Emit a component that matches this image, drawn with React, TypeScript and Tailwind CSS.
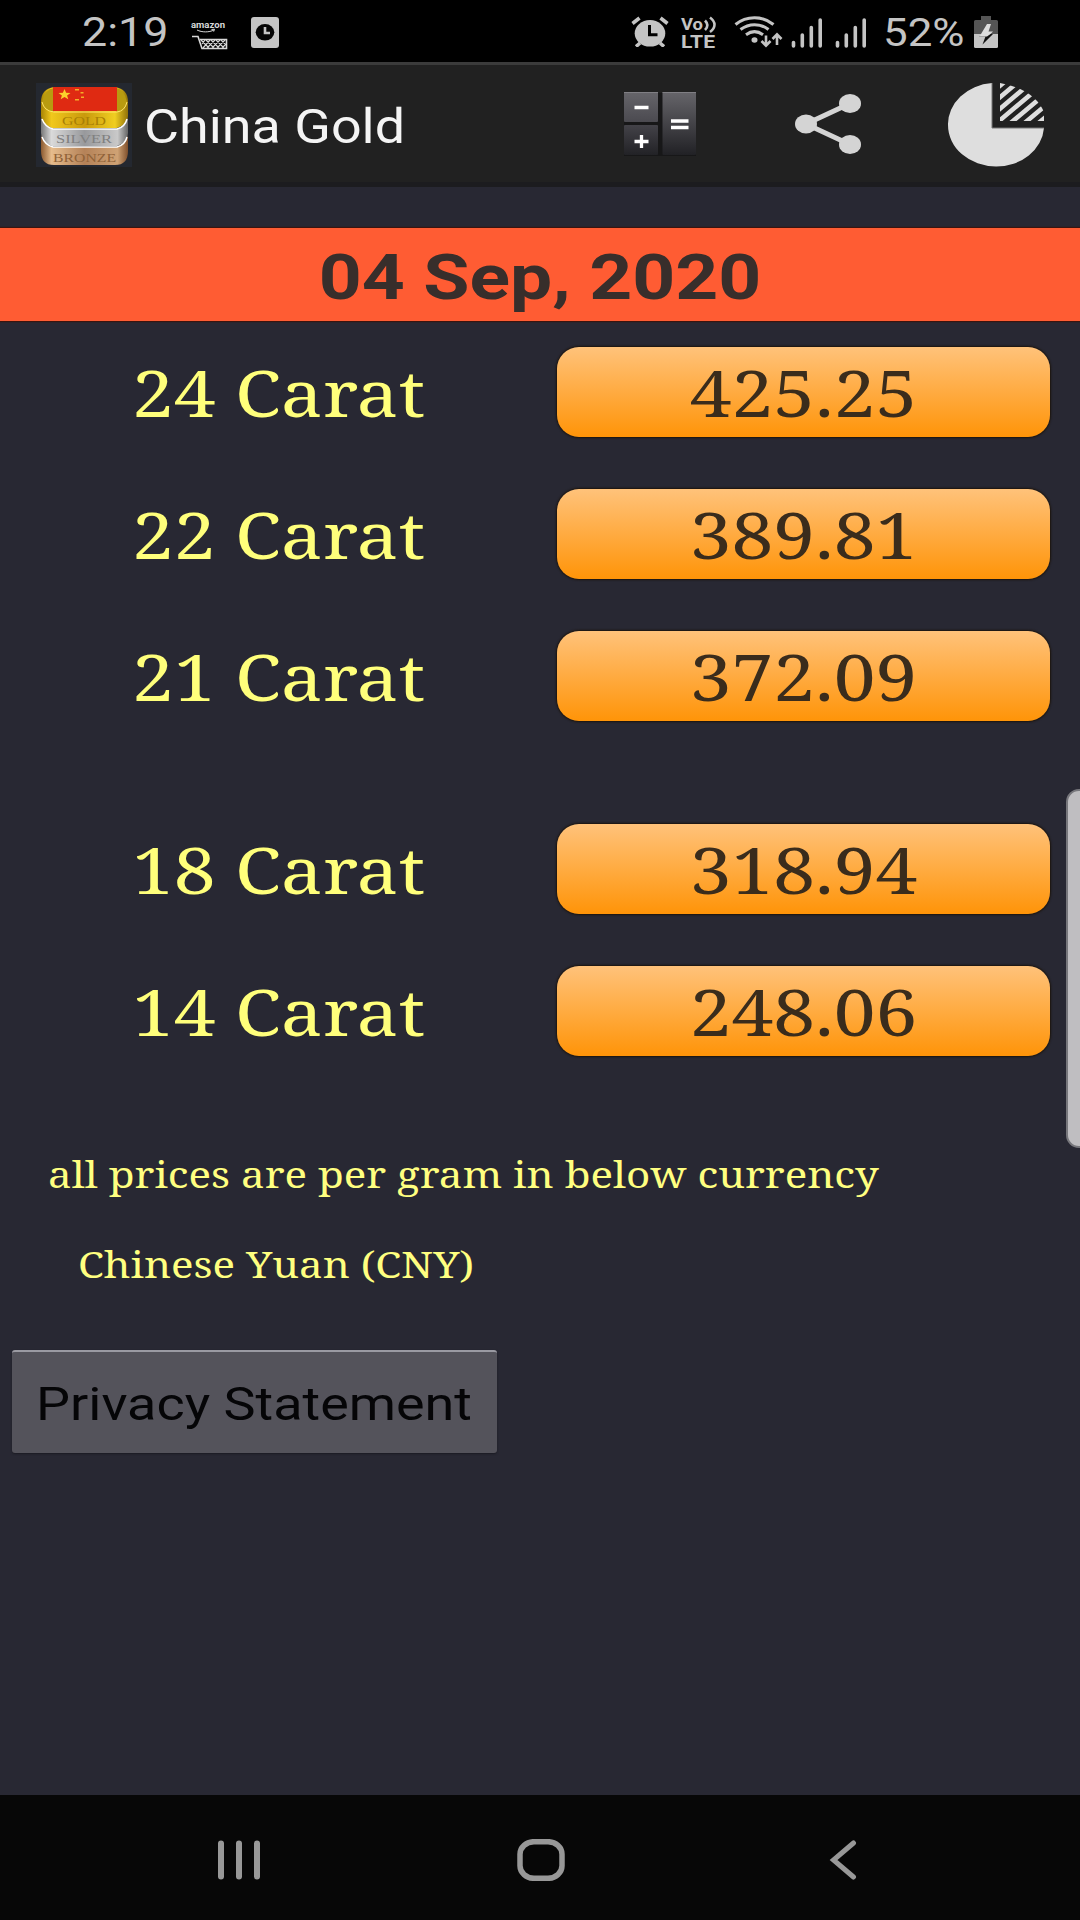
import React from 'react';

interface Rate {
  carat: string;
  price: string;
}

const upperRates: Rate[] = [
  { carat: '24 Carat', price: '425.25' },
  { carat: '22 Carat', price: '389.81' },
  { carat: '21 Carat', price: '372.09' },
];

const lowerRates: Rate[] = [
  { carat: '18 Carat', price: '318.94' },
  { carat: '14 Carat', price: '248.06' },
];

const SignalIcon = ({ className }: { className: string }) => (
  <svg viewBox="0 0 32 30" className={className} stroke="#c4c4c4" strokeWidth="3.6" strokeLinecap="round">
    <path d="M2.5 24.5v3.5M11.3 17v11M20.3 9.500v18.500M29.200 2v26" />
  </svg>
);

const StatusBar = () => (
  <div className="flex h-[62px] items-start bg-black font-['Roboto',sans-serif] text-[#c4c4c4]">
    <span className="ml-[82px] mt-[13px] block w-[109px] origin-left scale-x-[1.12] whitespace-nowrap text-[40px] leading-10">2:19</span>
    <svg viewBox="0 0 38 30" className="mt-5 h-[30px] w-[38px] overflow-visible" fill="none" stroke="#d8d8d8">
      <text x="0" y="8" textLength="34" lengthAdjust="spacingAndGlyphs" fontSize="9.500" fontWeight="700" fill="#d8d8d8" stroke="none">amazon</text>
      <path d="M6 10c5 2.500 12 2.500 17 0M20.500 9.500l3-.3-.8 2.400" strokeWidth="1" />
      <path d="M1 16.500h6l4 12h24.500V19.500H9" strokeWidth="1.600" />
      <path d="M10 20l8 8M15 20l8 8M20 20l8 8M25 20l8 8M30 20l5 5M14 20l-3 4M19 20l-7 8M24 20l-8 8M29 20l-8 8M34 20l-8 8M35 24l-4 4" strokeWidth="1.200" />
    </svg>
    <svg viewBox="0 0 28 31" className="ml-[22px] mt-[17px] h-[31px] w-7">
      <rect width="28" height="31" rx="3" fill="#c4c4c4" />
      <ellipse cx="14" cy="15.300" rx="9.300" ry="8.300" fill="#050505" />
      <path d="M14 10v6h5" fill="none" stroke="#c4c4c4" strokeWidth="2.600" />
    </svg>
    <svg viewBox="0 0 38 31" className="ml-[352px] mt-4 h-[31px] w-[38px]">
      <path d="M1.500 7.500L8.500 2M36.500 7.500L29.500 2M9 27l-4 3.500M29 27l4 3.500" stroke="#c4c4c4" strokeWidth="3.600" />
      <ellipse cx="19" cy="17.300" rx="15.300" ry="13.300" fill="#c4c4c4" />
      <path d="M18.500 9v9.700h8" fill="none" stroke="#000" strokeWidth="3" />
    </svg>
    <svg viewBox="0 0 36 34" className="ml-3 mt-4 h-[34px] w-9 overflow-visible" fill="#c4c4c4">
      <text x="0" y="14" textLength="22" lengthAdjust="spacingAndGlyphs" fontSize="17" fontWeight="700">Vo</text>
      <text x="0" y="31.500" textLength="34" lengthAdjust="spacingAndGlyphs" fontSize="17.500" fontWeight="700">LTE</text>
      <path d="M24 4.500c3 3 3 6.500 0 9.500M29 1.500c6 4.500 6 10 0 14.500" fill="none" stroke="#c4c4c4" strokeWidth="2.600" />
    </svg>
    <svg viewBox="0 0 49 32" className="ml-[17px] mt-4 h-8 w-[49px]" fill="none" stroke="#c4c4c4" strokeWidth="3">
      <path d="M1.500 8.500c11-9 27-9 38 0M6.500 13.500c8.500-6.500 19.500-6.500 28 0M12 18.700c5.500-4 11.500-4 17 0" />
      <ellipse cx="20.500" cy="24" rx="3" ry="2.700" fill="#c4c4c4" stroke="none" />
      <path d="M32 19.500v10M27.500 25l4.500 4.700 4.500-4.700M43 29V19M38.500 23l4.500-4.700 4.500 4.700" strokeWidth="2.600" />
    </svg>
    <SignalIcon className="ml-2 mt-[18px] h-[30px] w-8" />
    <SignalIcon className="ml-3 mt-[18px] h-[30px] w-8" />
    <span className="ml-4 mt-[13px] block w-[91px] origin-left scale-x-[1.11] whitespace-nowrap text-[39.500px] leading-10">52%</span>
    <svg viewBox="0 0 24 32" className="mt-4 h-8 w-6">
      <path d="M7 0h10v4h5.500q1.500 0 1.500 1.500V18H0V5.500Q0 4 1.500 4H7z" fill="#555" />
      <path d="M0 18h24v12.500q0 1.500-1.500 1.500h-21Q0 32 0 30.500z" fill="#c4c4c4" />
      <path d="M19 18l-10.500 10.500 3-8H5l5-2.500z" fill="#111" />
      <path d="M13 8h4l-2.500 7.500H19L16.500 18 13 20.500H5.500z" fill="#ddd" />
    </svg>
  </div>
);

const AppLogo = () => (
  <svg viewBox="0 0 96 84" className="h-[84px] w-24">
    <defs>
      <linearGradient id="gold" x2="1">
        <stop stopColor="#a88404" />
        <stop offset=".12" stopColor="#f1c81c" />
        <stop offset=".5" stopColor="#c9990c" />
        <stop offset=".85" stopColor="#f0ce22" />
        <stop offset="1" stopColor="#927208" />
      </linearGradient>
      <linearGradient id="silver" x2="1">
        <stop stopColor="#777" />
        <stop offset=".12" stopColor="#dadada" />
        <stop offset=".5" stopColor="#98999c" />
        <stop offset=".88" stopColor="#c9c9c9" />
        <stop offset="1" stopColor="#666" />
      </linearGradient>
      <linearGradient id="bronze" x2="1">
        <stop stopColor="#8c5a30" />
        <stop offset=".12" stopColor="#e6bc8c" />
        <stop offset=".5" stopColor="#b58258" />
        <stop offset=".88" stopColor="#cfa274" />
        <stop offset="1" stopColor="#80502c" />
      </linearGradient>
    </defs>
    <rect width="96" height="84" fill="#242830" />
    <path d="M5 52q2 8 11 12h65q9-4 11-12v16q0 14-13 14H18Q5 82 5 68z" fill="url(#bronze)" />
    <path d="M5 34q2 8 11 12h65q9-4 11-12v16q0 9-11 13H16Q5 59 5 50z" fill="url(#silver)" />
    <path d="M18 4h61q13 2 13 15v14q0 8-11 12H16Q5 41 5 33V19Q5 6 18 4z" fill="url(#gold)" />
    <path d="M6 19Q9 6 18 5v24Q8 27 6 19zM91 19Q88 6 80 5v24q9-2 11-10z" fill="#b89b10" />
    <path d="M6 19q2 9 12 10h63q8-1 10-10" fill="none" stroke="#ffe569" strokeWidth="1" />
    <path d="M6 36q3 8 11 10h64q8-2 10-10M6 54q3 8 11 10h64q8-2 10-10" fill="none" stroke="#fff" strokeWidth="1.500" />
    <path d="M17 4h64v24H17z" fill="#df2a12" />
    <path d="M28.500 6l1.600 3.700 4.400.2-3.400 2.500 1.200 3.800-3.800-2.200-3.800 2.200 1.200-3.800-3.400-2.500 4.400-.2z" fill="#fbd02c" />
    <path d="M39 6h4v1.500h-4zM44.500 9h3v1.500h-3zM45 13.500h3V15h-3zM39 16h4v1.500h-4z" fill="#f4ae28" />
    <g fontFamily="Liberation Serif, serif" fontSize="13.500">
      <text x="26" y="42" textLength="44" lengthAdjust="spacingAndGlyphs" fill="#a87f05">GOLD</text>
      <text x="20" y="60" textLength="56" lengthAdjust="spacingAndGlyphs" fill="#808080">SILVER</text>
      <text x="17" y="78.500" textLength="63" lengthAdjust="spacingAndGlyphs" fill="#8f6238">BRONZE</text>
    </g>
  </svg>
);

const CalculatorIcon = () => (
  <svg viewBox="0 0 72 64" className="h-16 w-[72px]">
    <defs>
      <linearGradient id="key" x2="0" y2="1">
        <stop stopColor="#66656a" />
        <stop offset="1" stopColor="#4b4a50" />
      </linearGradient>
      <linearGradient id="keyDark" x2="0" y2="1">
        <stop stopColor="#434248" />
        <stop offset="1" stopColor="#222226" />
      </linearGradient>
      <linearGradient id="keyTall" x2="0" y2="1">
        <stop stopColor="#66656a" />
        <stop offset="1" stopColor="#212125" />
      </linearGradient>
    </defs>
    <rect x="-1" y="1" width="74" height="63" rx="2" fill="#171718" />
    <rect width="34" height="30" y="0" rx="1" fill="url(#key)" />
    <rect width="34" height="30" y="33" rx="1" fill="url(#keyDark)" />
    <rect x="38.500" width="33.500" height="63" rx="1" fill="url(#keyTall)" />
    <path d="M0 .5h34M38.500 .5H72" stroke="#807f84" />
    <path d="M10.500 15.500H24.500M10.500 49.500H24.500M17.500 43v13M47 29h17.500M47 35.500h17.500" stroke="#fff" strokeWidth="3.300" />
  </svg>
);

const ShareIcon = () => (
  <svg viewBox="0 0 66 60" className="ml-[99px] h-[60px] w-[66px]" fill="#d4d4d4">
    <path d="M55 9.500L11 30l44 20.500" fill="none" stroke="#d4d4d4" strokeWidth="5" />
    <ellipse cx="55" cy="9.500" rx="11" ry="9.500" />
    <ellipse cx="11" cy="30" rx="11" ry="9.500" />
    <ellipse cx="55" cy="50.500" rx="11" ry="9.500" />
  </svg>
);

const ChartIcon = () => (
  <svg viewBox="0 0 96 84" className="ml-[87px] h-[84px] w-24">
    <defs>
      <clipPath id="slice">
        <path d="M52 0Q86 6 96 29v9H52z" />
      </clipPath>
    </defs>
    <path d="M44 0v45h52A48 41.500 0 0 1 48 83.500 48 41.500 0 0 1 0 42 48 41.500 0 0 1 44 0z" fill="#dedede" />
    <path d="M44 0v45h52" fill="none" stroke="#777" />
    <g clipPath="url(#slice)" stroke="#dedede" strokeWidth="4.600">
      <path d="M48 6l50-42M48 17.500l50-42M48 29l50-42M48 40.500l50-42M62 40.500l50-42M76 40.500l50-42M90 40.500l50-42" />
    </g>
  </svg>
);

const AppBar = () => (
  <header className="flex h-[125px] items-start border-t-[3px] border-b-[5px] border-t-[#3b3b3b] border-b-[#1c1c1f] bg-[#212121] pl-9">
    <div className="mt-[18px]">
      <AppLogo />
    </div>
    <h1 className="ml-3 mt-[37px] w-[480px] origin-left scale-x-[1.122] whitespace-nowrap font-['Roboto',sans-serif] text-[48px] leading-[50px] text-[#f4f4f4]">China Gold</h1>
    <div className="mt-[27px]">
      <CalculatorIcon />
    </div>
    <div className="mt-[29px]">
      <ShareIcon />
    </div>
    <div className="mt-[18px]">
      <ChartIcon />
    </div>
  </header>
);

const RateRow: React.FC<Rate> = ({ carat, price }) => (
  <div className="flex h-[90px] items-start font-['Noto_Serif','DejaVu_Serif',serif] text-[64px] leading-[92px]">
    <div className="w-[557px] text-center text-[#ffff7b]">
      <span className="inline-block scale-x-[1.168] whitespace-nowrap">{carat}</span>
    </div>
    <div className="h-[90px] w-[493px] rounded-[22px] bg-linear-to-b/srgb from-[#ffc27a] to-[#ff9408] text-center text-[#3a2c1c] shadow-[0_0_2px_1px_#1c140c]">
      <span className="inline-block scale-x-[1.168] whitespace-nowrap">{price}</span>
    </div>
  </div>
);

const NavBar = () => (
  <nav className="flex h-[125px] items-start bg-[#070707] pt-11">
    <svg viewBox="0 0 42 40" className="ml-[218px] mt-[1px] h-10 w-[42px]" stroke="#989898" strokeWidth="6" strokeLinecap="round">
      <path d="M3 3.500v33M21 3.500v33M39 3.500v33" />
    </svg>
    <svg viewBox="0 0 48 42" className="ml-[257px] h-[42px] w-12" fill="none" stroke="#989898" strokeWidth="5.500">
      <rect x="3" y="2.700" width="42" height="36.600" rx="14" ry="12.500" />
    </svg>
    <svg viewBox="0 0 28 40" className="ml-[264px] mt-[1px] h-10 w-7" fill="none" stroke="#989898" strokeWidth="5" strokeLinecap="round">
      <path d="M24.500 3L4.500 20l20 17" />
    </svg>
  </nav>
);

const App: React.FC = () => {
  return (
    <div className="relative flex h-[1920px] w-[1080px] flex-col overflow-hidden bg-[#282833]">
      <StatusBar />
      <AppBar />
      <main className="flex flex-1 flex-col items-start pt-[41px]">
        <div className="h-[93px] w-full bg-[#ff5c33] text-center font-['Roboto',sans-serif] text-[63px] font-bold leading-[100px] text-[#382e2b] shadow-[0_0_1px_1px_#3a1510]">
          <span className="inline-block scale-x-[1.19] whitespace-nowrap">04 Sep, 2020</span>
        </div>
        <div className="mt-[26px] flex flex-col gap-[52px]">
          {upperRates.map((rate) => (
            <RateRow key={rate.carat} {...rate} />
          ))}
        </div>
        <div className="mt-[103px] flex flex-col gap-[52px]">
          {lowerRates.map((rate) => (
            <RateRow key={rate.carat} {...rate} />
          ))}
        </div>
        <div className="mt-[94px] font-['Noto_Serif','DejaVu_Serif',serif] text-[36px] leading-[50px] text-[#ffff80]">
          <p className="ml-12 origin-left scale-x-[1.169] whitespace-nowrap">all prices are per gram in below currency</p>
          <p className="ml-[78px] mt-10 origin-left scale-x-[1.168] whitespace-nowrap">Chinese Yuan (CNY)</p>
        </div>
        <button
          type="button"
          className="ml-3 mt-[60px] h-[103px] w-[485px] rounded-[3px] border-t-2 border-t-[#9a9aa2] bg-[#54535b] pl-6 pt-1 text-left font-['Roboto',sans-serif] text-[46px] text-[#050507] shadow-[0_1px_2px_#1b1b23]"
        >
          <span className="inline-block origin-left scale-x-[1.172] whitespace-nowrap">Privacy Statement</span>
        </button>
      </main>
      <NavBar />
      {/* edge panel handle */}
      <div className="absolute -right-3 top-[789px] h-[359px] w-[26px] rounded-[16px] border-2 border-[#77777c] bg-[#bfbec1]" />
    </div>
  );
};

export default App;
